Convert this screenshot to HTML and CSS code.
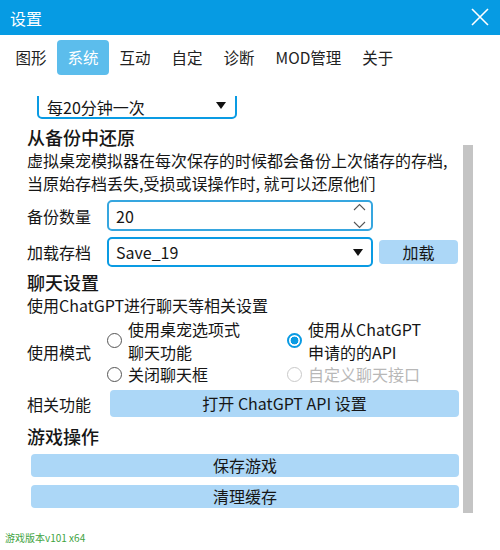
FILE: index.html
```html
<!DOCTYPE html>
<html lang="zh">
<head>
<meta charset="utf-8">
<title>设置</title>
<link rel="stylesheet" href="styles.css">
</head>
<body>
<div class="window">
  <header class="titlebar">
    <span class="title">设置</span>
    <svg class="close" width="18" height="18" viewBox="0 0 18 18"><path d="M1 1 L17 17 M17 1 L1 17" stroke="#fff" stroke-width="1.6" fill="none"/></svg>
  </header>
  <nav class="tabs">
    <span class="tab">图形</span>
    <span class="tab active">系统</span>
    <span class="tab">互动</span>
    <span class="tab">自定</span>
    <span class="tab">诊断</span>
    <span class="tab">MOD管理</span>
    <span class="tab">关于</span>
  </nav>
  <div class="viewport">
    <div class="content">
      <div class="combo">
        <span>每20分钟一次</span>
        <svg class="tri" width="10" height="7" viewBox="0 0 10 7"><path d="M0 0 H10 L5 7 Z" fill="#111"/></svg>
      </div>
      <h2 class="heading h-first">从备份中还原</h2>
      <p class="desc">虚拟桌宠模拟器在每次保存的时候都会备份上次储存的存档,<br>当原始存档丢失,受损或误操作时, 就可以还原他们</p>
      <div class="row row-spin">
        <span class="label">备份数量</span>
        <div class="field spin">
          <span>20</span>
          <svg class="chev" width="13" height="26" viewBox="0 0 13 26"><path d="M1 7 L6.5 1.5 L12 7 M1 19 L6.5 24.5 L12 19" stroke="#555" stroke-width="1.1" fill="none"/></svg>
        </div>
      </div>
      <div class="row row-select">
        <span class="label">加载存档</span>
        <div class="field select">
          <span>Save_19</span>
          <svg class="tri" width="10" height="7" viewBox="0 0 10 7"><path d="M0 0 H10 L5 7 Z" fill="#111"/></svg>
        </div>
        <span class="btn btn-load">加载</span>
      </div>
      <h2 class="heading h-chat">聊天设置</h2>
      <p class="desc">使用ChatGPT进行聊天等相关设置</p>
      <div class="radios">
        <span class="label mode-label">使用模式</span>
        <div class="radio r1"><span class="dot"></span><span class="rtext">使用桌宠选项式聊天功能</span></div>
        <div class="radio r2 checked"><span class="dot"></span><span class="rtext">使用从ChatGPT申请的的API</span></div>
        <div class="radio r3"><span class="dot"></span><span class="rtext">关闭聊天框</span></div>
        <div class="radio r4 disabled"><span class="dot"></span><span class="rtext">自定义聊天接口</span></div>
      </div>
      <div class="row row-related">
        <span class="label">相关功能</span>
        <span class="btn btn-wide">打开 ChatGPT API 设置</span>
      </div>
      <h2 class="heading h-game">游戏操作</h2>
      <span class="btn btn-game btn-save">保存游戏</span>
      <span class="btn btn-game btn-clear">清理缓存</span>
    </div>
    <div class="scrollbar"><div class="thumb"></div></div>
  </div>
  <footer class="footer">游戏版本v101 x64</footer>
</div>
</body>
</html>
```

FILE: styles.css
```css
* { box-sizing: border-box; }
html, body { margin: 0; padding: 0; background: #fff; }
body {
  width: 500px;
  height: 550px;
  overflow: hidden;
  font-family: "Noto Sans CJK SC", "Noto Sans", sans-serif;
  color: #161616;
}
.window { width: 500px; height: 550px; display: flex; flex-direction: column; }

.titlebar {
  height: 35px;
  background: #069be3;
  display: flex;
  align-items: center;
  justify-content: space-between;
  padding: 0 11px 0 10px;
  flex-shrink: 0;
}
.title { color: #fff; font-size: 16px; line-height: 20px; }
.close { display: block; margin-top: -1px; }

.tabs { display: flex; margin-top: 5px; padding-left: 5px; height: 35px; flex-shrink: 0; }
.tab {
  padding: 0 10.5px;
  font-size: 15.5px;
  line-height: 35px;
  color: #222;
  border-radius: 4px;
}
.tab.active { background: #5cbdec; color: #fff; }

.viewport {
  margin-top: 21px;
  height: 417px;
  display: flex;
  overflow: hidden;
  flex-shrink: 0;
}
.content {
  flex: 1;
  padding-left: 27px;
  padding-right: 4px;
  display: flex;
  flex-direction: column;
  align-items: flex-start;
}
.scrollbar { width: 10px; margin-right: 27px; display: flex; flex-direction: column; }
.thumb { margin-top: 49px; flex: 1; background: #c4c4c4; }

.combo {
  margin-top: -12px;
  margin-left: 10px;
  width: 200px;
  height: 35px;
  border: 2px solid #0a9be3;
  border-radius: 5px;
  display: flex;
  align-items: center;
  justify-content: space-between;
  padding: 11px 9px 0 8px;
  font-size: 16px;
  line-height: 20px;
}
.combo .tri { margin-top: -4px; }
.tri { display: block; }

.heading { margin: 0; font-size: 18px; line-height: 23px; font-weight: 500; }
.h-first { margin-top: 7px; }
.h-chat { margin-top: 4px; }
.h-game { margin-top: 8px; }

.desc { margin: 0; font-size: 16px; line-height: 23px; white-space: nowrap; }

.row { display: flex; align-items: center; }
.label { width: 80px; font-size: 16px; line-height: 22px; flex-shrink: 0; }
.row-spin { margin-top: 5px; }
.row-select { margin-top: 6px; }
.field {
  width: 266px;
  border: 2px solid #36a6df;
  border-radius: 5px;
  display: flex;
  align-items: center;
  justify-content: space-between;
  padding: 0 5px 0 7px;
  font-size: 16px;
}
.spin { height: 31px; }
.chev { display: block; }
.select { height: 30px; border-color: #0a9be3; padding-right: 8px; }
.btn {
  background: #acd7f7;
  border-radius: 4px;
  font-size: 16px;
  text-align: center;
  color: #161616;
  display: block;
}
.btn-load { margin-left: 6px; width: 79px; height: 24px; line-height: 24px; }

.radios {
  margin-top: 1px;
  display: grid;
  grid-template-columns: 80px 180px 160px;
  grid-template-rows: 45px 22px;
}
.mode-label { grid-row: 1 / 3; grid-column: 1; align-self: center; }
.radio { display: flex; align-items: center; font-size: 16px; line-height: 22.5px; }
.r1 { grid-row: 1; grid-column: 2; }
.r2 { grid-row: 1; grid-column: 3; }
.r3 { grid-row: 2; grid-column: 2; }
.r4 { grid-row: 2; grid-column: 3; }
.rtext { width: 118px; margin-left: 6px; }
.r3 .rtext, .r4 .rtext { width: auto; white-space: nowrap; }
.dot {
  width: 15px;
  height: 15px;
  border-radius: 50%;
  border: 1.6px solid #555;
  flex-shrink: 0;
  background: #fff;
}
.checked .dot {
  border: 2px solid #0a9be3;
  background: radial-gradient(circle, #0a9be3 0 3.6px, #fff 4.2px);
}
.disabled .dot { border-color: #c9c9c9; }
.disabled .rtext { color: #b8b8b8; }

.row-related { margin-top: 5px; }
.btn-wide { margin-left: 3px; width: 349px; height: 27px; line-height: 27px; }

.btn-game { margin-left: 4px; width: 428px; height: 23px; line-height: 23px; }
.btn-save { margin-top: 6px; }
.btn-clear { margin-top: 8px; }

.footer {
  margin-top: 17px;
  padding-left: 5px;
  font-size: 10px;
  line-height: 16px;
  color: #3fa33f;
}
```
